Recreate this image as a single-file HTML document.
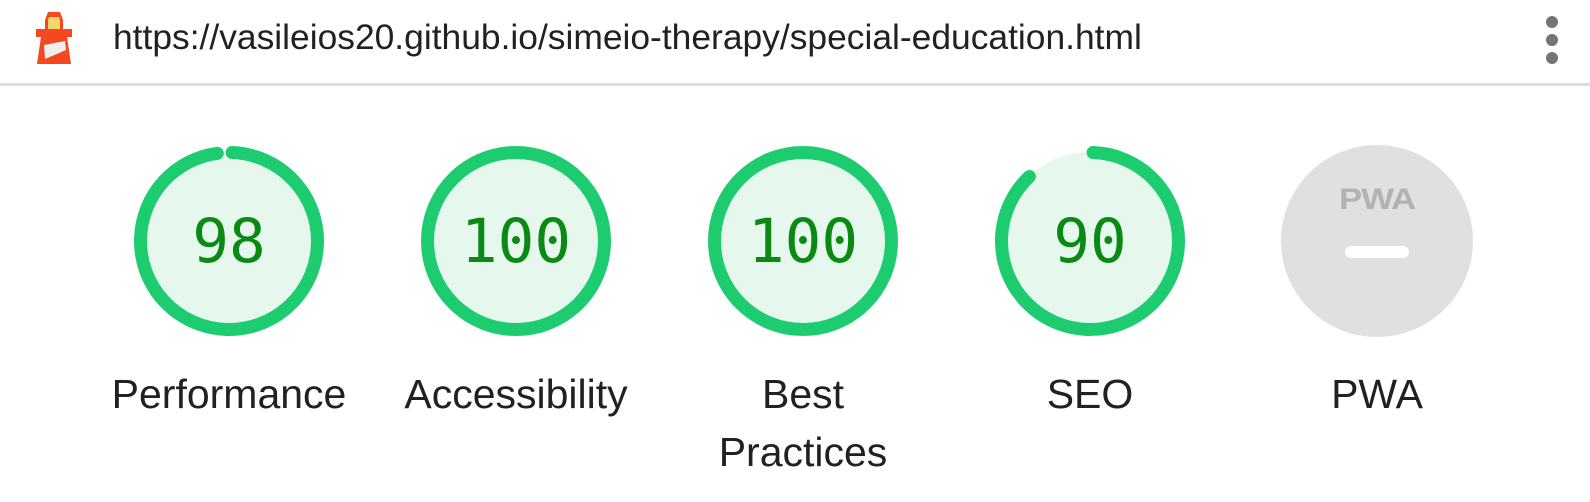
<!DOCTYPE html>
<html><head><meta charset="utf-8"><style>
html,body{margin:0;padding:0;background:#fff;width:1590px;height:502px;overflow:hidden;font-family:"Liberation Sans",Arial,sans-serif}
.hdr{position:absolute;left:0;top:0;width:1590px;height:83px;border-bottom:3px solid #dedede}
.url{position:absolute;left:113px;top:17px;font-size:35.4px;color:#202124;white-space:nowrap}
.dot{position:absolute;left:1546px;width:12px;height:12px;border-radius:50%;background:#757575}
.g{position:absolute;top:145px;width:192px;height:192px}
.lab{position:absolute;top:365px;width:300px;text-align:center;font-size:41px;line-height:58px;color:#212121}
.num{font-family:"DejaVu Sans Mono","Liberation Mono",monospace;font-size:61px;fill:#0a8a12}
</style></head><body>
<div class="hdr">
<svg style="position:absolute;left:34px;top:10px" width="40" height="56" viewBox="0 0 40 56">
<polygon points="14,2 26,2 29,10 29,19 11,19 11,10" fill="#f4481f"/>
<polygon points="15,7 25,7 26,10 26,19 14,19 14,10" fill="#f2d66e"/>
<rect x="2" y="19" width="36" height="8" fill="#f4481f"/>
<polygon points="7,27 33,27 37,54 3,54" fill="#f4481f"/>
<polygon points="10,35 31,31 32,40 11,49" fill="#f0f0f0"/>
</svg>
<div class="url">https://vasileios20.github.io/simeio-therapy/special-education.html</div>
<div class="dot" style="top:16px"></div><div class="dot" style="top:34px"></div><div class="dot" style="top:52px"></div>
</div>

<svg class="g" style="left:133px" viewBox="0 0 192 192"><circle cx="96" cy="96" r="89" fill="#e6f7ee"/><circle cx="96" cy="96" r="88.5" fill="none" stroke="#1ecc70" stroke-width="13" stroke-linecap="round" stroke-dasharray="541 556" transform="rotate(-88 96 96)"/><text class="num" x="96" y="117" text-anchor="middle">98</text></svg>
<svg class="g" style="left:420px" viewBox="0 0 192 192"><circle cx="96" cy="96" r="89" fill="#e6f7ee"/><circle cx="96" cy="96" r="88.5" fill="none" stroke="#1ecc70" stroke-width="13"/><text class="num" x="96" y="117" text-anchor="middle">100</text></svg>
<svg class="g" style="left:707px" viewBox="0 0 192 192"><circle cx="96" cy="96" r="89" fill="#e6f7ee"/><circle cx="96" cy="96" r="88.5" fill="none" stroke="#1ecc70" stroke-width="13"/><text class="num" x="96" y="117" text-anchor="middle">100</text></svg>
<svg class="g" style="left:994px" viewBox="0 0 192 192"><circle cx="96" cy="96" r="89" fill="#e6f7ee"/><circle cx="96" cy="96" r="88.5" fill="none" stroke="#1ecc70" stroke-width="13" stroke-linecap="round" stroke-dasharray="486 556" transform="rotate(-88 96 96)"/><text class="num" x="96" y="117" text-anchor="middle">90</text></svg>
<svg class="g" style="left:1281px" viewBox="0 0 192 192"><circle cx="96" cy="96" r="96" fill="#e0e0e0"/>
<text x="96" y="64" text-anchor="middle" font-family="Liberation Sans,Arial,sans-serif" font-weight="bold" font-size="30" fill="#b2b2b2" letter-spacing="-1" textLength="76" lengthAdjust="spacingAndGlyphs">PWA</text>
<rect x="64" y="101" width="64" height="12" rx="6" fill="#fff"/></svg>

<div class="lab" style="left:79px">Performance</div>
<div class="lab" style="left:366px">Accessibility</div>
<div class="lab" style="left:653px">Best<br>Practices</div>
<div class="lab" style="left:940px">SEO</div>
<div class="lab" style="left:1227px">PWA</div>
</body></html>
